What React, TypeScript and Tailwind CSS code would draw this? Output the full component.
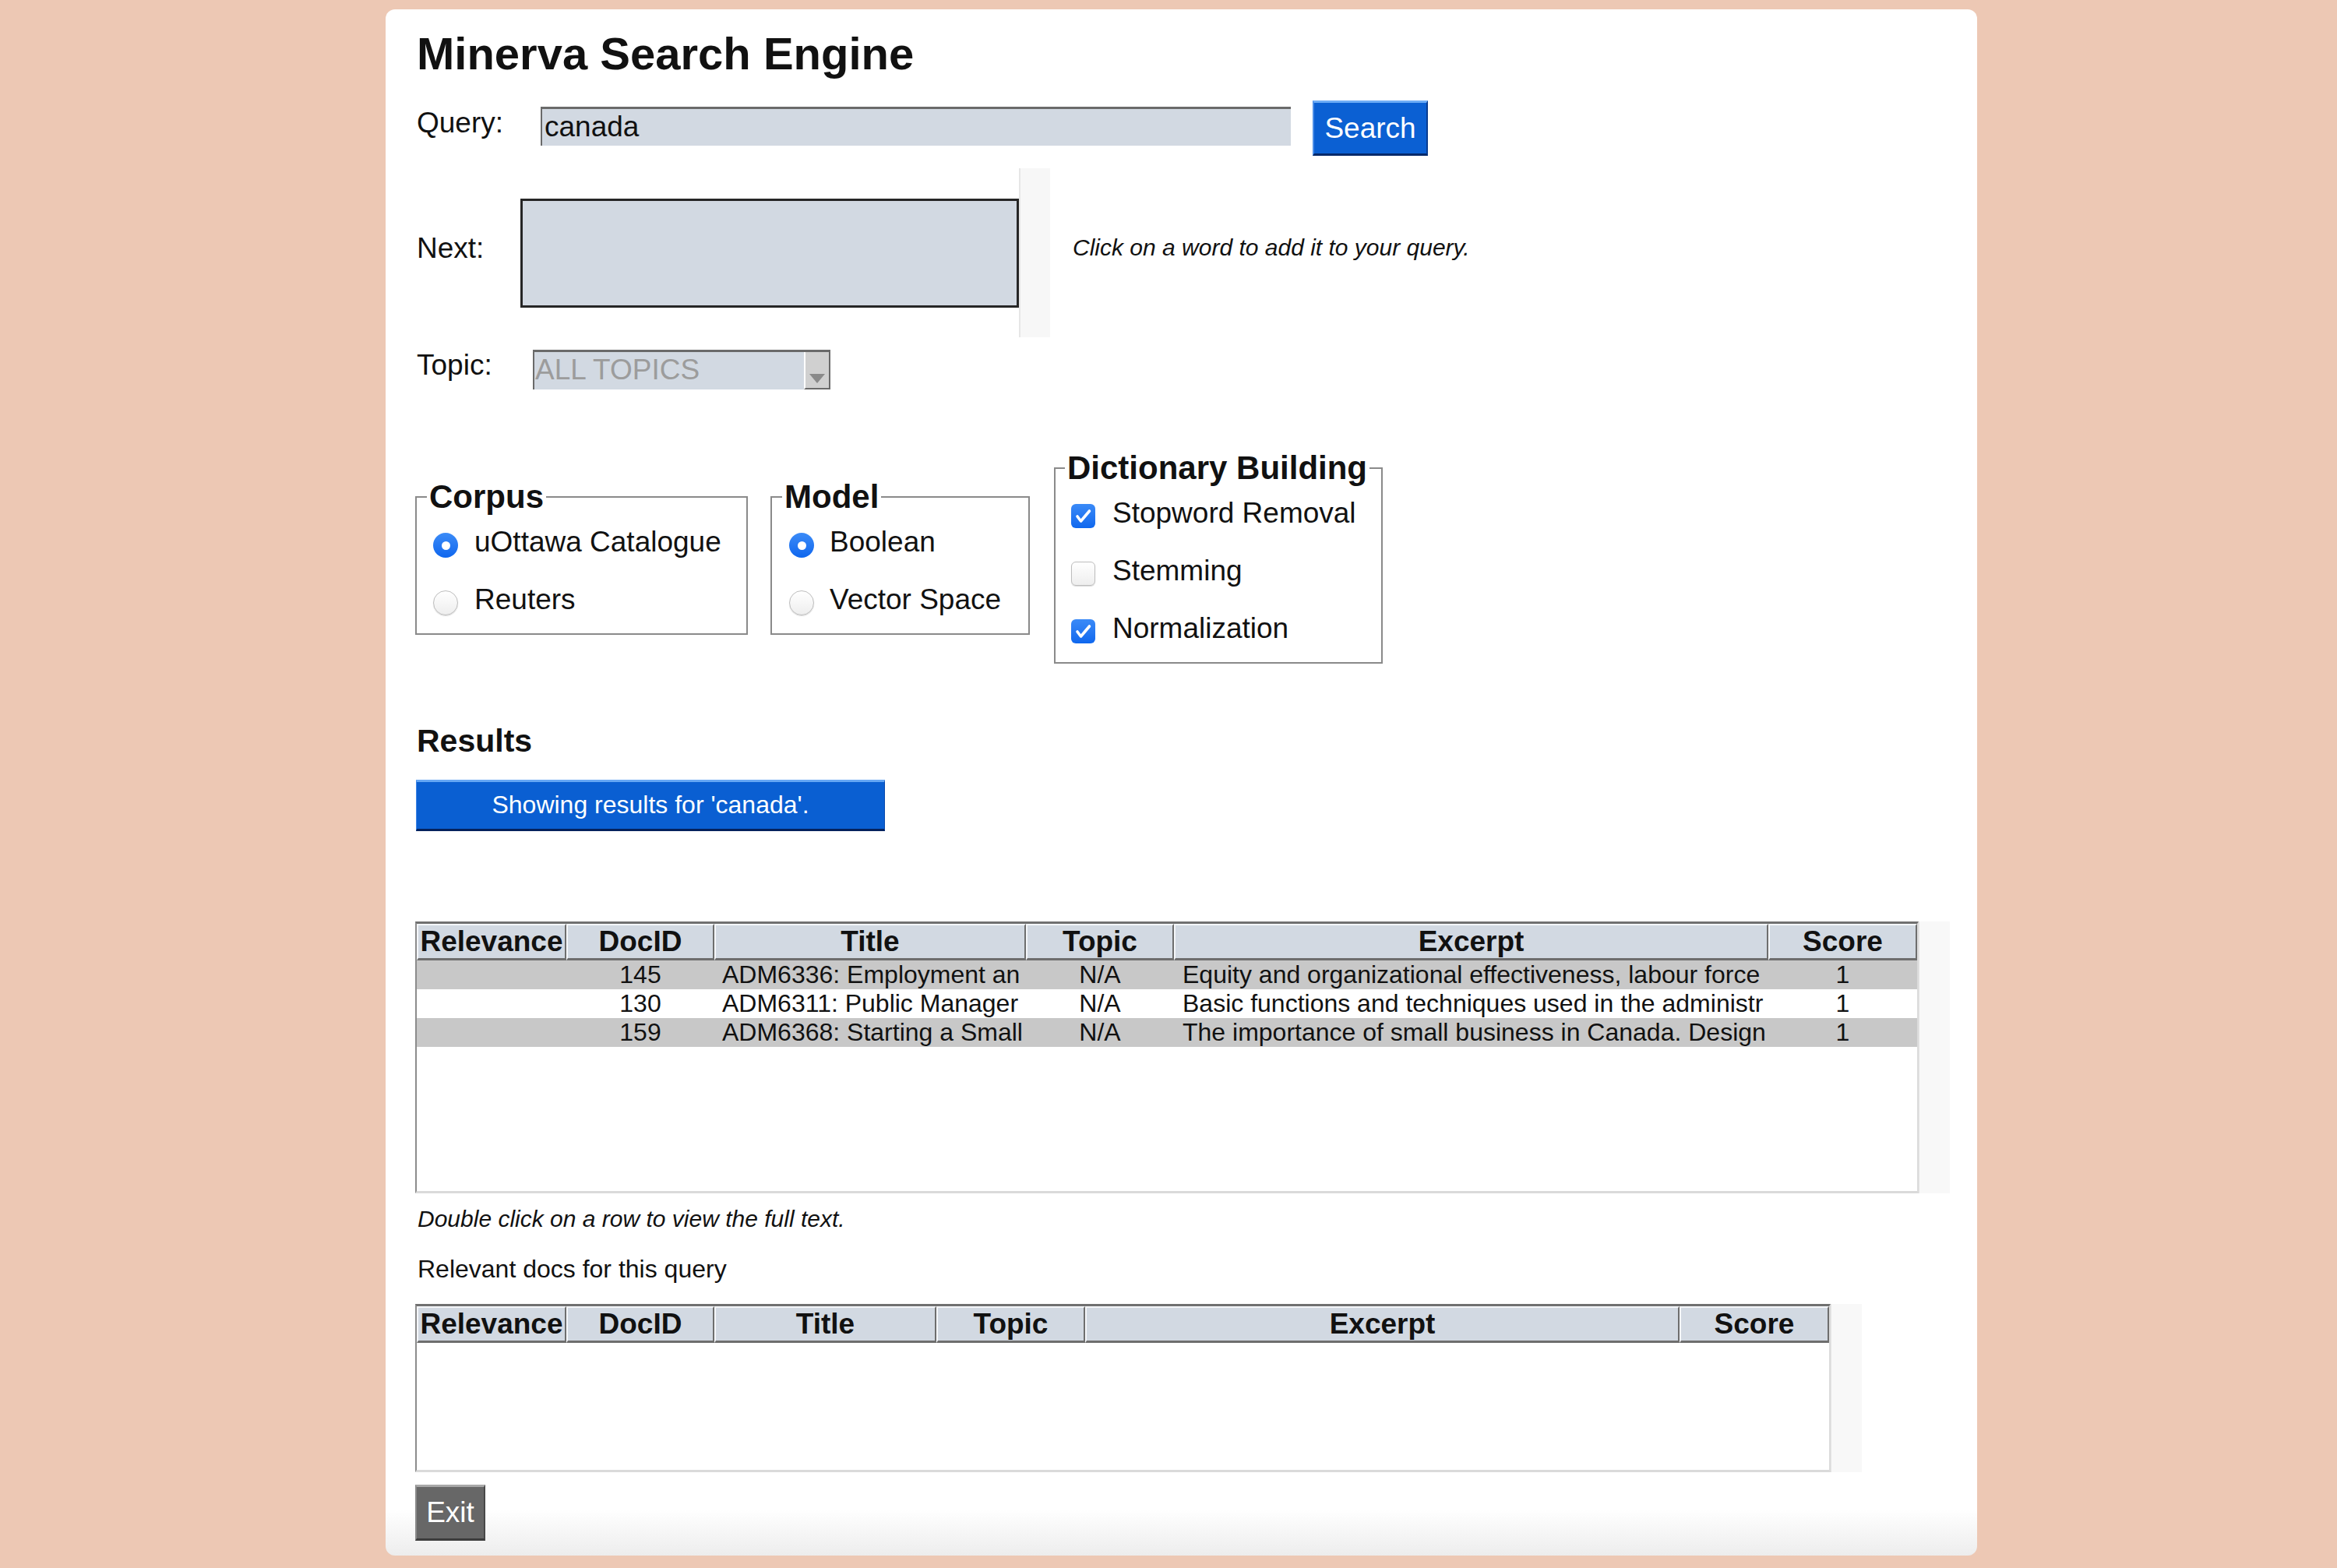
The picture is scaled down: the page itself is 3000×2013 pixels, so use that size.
import React from 'react';

interface Col {
    name: string;
    w: string;
    align: string;
}

interface Row {
    id: string;
    title: string;
    topic: string;
    excerpt: string;
    score: string;
}

const resultCols: Col[] = [
    { name: 'Relevance', w: 'w-[192px]', align: 'text-center' },
    { name: 'DocID', w: 'w-[190px]', align: 'text-center' },
    { name: 'Title', w: 'w-[400px]', align: 'text-left pl-[10px]' },
    { name: 'Topic', w: 'w-[190px]', align: 'text-center' },
    { name: 'Excerpt', w: 'w-[763px]', align: 'text-left pl-[11px]' },
    { name: 'Score', w: 'w-[191px]', align: 'text-center' },
];

const relevantCols: Col[] = [
    { name: 'Relevance', w: 'w-[192px]', align: 'text-center' },
    { name: 'DocID', w: 'w-[190px]', align: 'text-center' },
    { name: 'Title', w: 'w-[285px]', align: 'text-left pl-[10px]' },
    { name: 'Topic', w: 'w-[191px]', align: 'text-center' },
    { name: 'Excerpt', w: 'w-[763px]', align: 'text-left pl-[11px]' },
    { name: 'Score', w: 'w-[192px]', align: 'text-center' },
];

// cell text as the table shows it (columns cut the rest off)
const results: Row[] = [
    {
        id: '145',
        title: 'ADM6336: Employment an',
        topic: 'N/A',
        excerpt: 'Equity and organizational effectiveness, labour force',
        score: '1',
    },
    {
        id: '130',
        title: 'ADM6311: Public Manager',
        topic: 'N/A',
        excerpt: 'Basic functions and techniques used in the administr',
        score: '1',
    },
    {
        id: '159',
        title: 'ADM6368: Starting a Small',
        topic: 'N/A',
        excerpt: 'The importance of small business in Canada. Design',
        score: '1',
    },
];

const Radio: React.FC<{ checked?: boolean }> = ({ checked }) =>
    checked ? (
        <span className="mt-[9px] flex h-[32px] w-[32px] shrink-0 items-center justify-center rounded-full bg-linear-to-b from-[#3B8BF7] to-[#0D66EE]">
            <span className="h-[11px] w-[11px] rounded-full bg-white" />
        </span>
    ) : (
        <span className="mt-[9px] h-[32px] w-[32px] shrink-0 rounded-full border border-[#BDBDBD] bg-linear-to-b from-white to-[#EEEEEE] shadow-[0_1px_1px_rgba(0,0,0,0.15)]" />
    );

const Checkbox: React.FC<{ checked?: boolean }> = ({ checked }) =>
    checked ? (
        <span className="mt-[9px] flex h-[31px] w-[31px] shrink-0 items-center justify-center rounded-[6px] bg-linear-to-b from-[#3A8AF7] to-[#0E67EE]">
            <svg width="31" height="31" viewBox="0 0 31 31">
                <polyline points="8,16 12.5,22 23.5,9" fill="none" stroke="white" strokeWidth="3.6" strokeLinecap="round" strokeLinejoin="round" />
            </svg>
        </span>
    ) : (
        <span className="mt-[9px] h-[31px] w-[31px] shrink-0 rounded-[6px] border border-[#BDBDBD] bg-linear-to-b from-white to-[#EEEEEE] shadow-[0_1px_1px_rgba(0,0,0,0.15)]" />
    );

const DataTable: React.FC<{ cols: Col[]; rows: Row[]; box: string }> = ({ cols, rows, box }) => (
    <div className="flex">
        <div className={`${box} overflow-hidden border-t-[3px] border-r-2 border-b-[3px] border-l-2 border-t-[#707070] border-r-[#DCDCDC] border-b-[#DADADA] border-l-[#8C8C8C] bg-white`}>
            <div className="flex">
                {cols.map((c) => (
                    <div
                        key={c.name}
                        className={`${c.w} h-[47px] shrink-0 whitespace-nowrap border-t-2 border-r-2 border-b-[3px] border-l-2 border-t-[#F4F6F9] border-r-[#6E6E6E] border-b-[#6E6E6E] border-l-[#F4F6F9] bg-[#D2D9E2] text-center text-[37px] leading-[42px] font-bold`}
                    >
                        {c.name}
                    </div>
                ))}
            </div>
            {rows.map((r, i) => {
                const vals = ['', r.id, r.title, r.topic, r.excerpt, r.score];
                return (
                    <div key={r.id} className={`flex h-[37px] ${i % 2 === 0 ? 'bg-[#C8C8C8]' : 'bg-white'}`}>
                        {cols.map((c, j) => (
                            <div key={c.name} className={`${c.w} ${c.align} shrink-0 overflow-hidden whitespace-nowrap text-[32px] leading-[37px]`}>
                                {vals[j]}
                            </div>
                        ))}
                    </div>
                );
            })}
        </div>
        <div className="w-[40px] self-stretch border-l border-[#E3E3E3] bg-[#F8F8F8]" />
    </div>
);

const App: React.FC = () => {
    return (
        <div className="h-[2013px] w-[3000px] overflow-hidden bg-[#EDC8B4] pt-[12px] font-['Liberation_Sans',Arial,Helvetica,sans-serif] text-[#111]">
            <div className="ml-[495px] flex h-[1985px] w-[2043px] flex-col items-start rounded-[12px] bg-linear-to-b from-white from-[97%] to-[#EDEDED] pt-[23px] pl-[38px]">
                <h1 className="ml-[2px] text-[58px] leading-[68px] font-bold">Minerva Search Engine</h1>

                {/* query row */}
                <div className="mt-[26px] flex items-start">
                    <div className="mt-[8px] ml-[2px] w-[159px] text-[37px] leading-[42px]">Query:</div>
                    <div className="mt-[8px] h-[50px] w-[963px] border-t-[3px] border-l-2 border-[#6A6A6A] bg-[#D2D9E2] pt-[2px] pl-[3px] text-[37px] leading-[42px]">
                        canada
                    </div>
                    <button className="ml-[28px] h-[71px] w-[148px] border-t-[3px] border-r-2 border-b-[3px] border-l-2 border-t-[#6EADF6] border-r-[#0A3C90] border-b-[#06296A] border-l-[#4C8EE8] bg-[#0B60D3] text-[37px] leading-[42px] text-white">
                        Search
                    </button>
                </div>

                {/* next words */}
                <div className="mt-[16px] flex h-[217px] items-start">
                    <div className="mt-[82px] ml-[2px] w-[133px] text-[37px] leading-[42px]">Next:</div>
                    <div className="flex h-full items-center">
                        <div className="h-[140px] w-[640px] border-[3px] border-[#262626] bg-[#D2D9E2]" />
                        <div className="h-full w-[40px] border-l-2 border-[#E6E6E6] bg-[#F7F7F7]" />
                    </div>
                    <div className="mt-[85px] ml-[29px] text-[30px] leading-[34px] italic">Click on a word to add it to your query.</div>
                </div>

                {/* topic */}
                <div className="mt-[15px] flex items-start">
                    <div className="ml-[2px] w-[149px] text-[37px] leading-[42px]">Topic:</div>
                    <div className="mt-[1px] flex h-[51px] w-[382px] border-t-[3px] border-l-2 border-[#6A6A6A] bg-[#D2D9E2]">
                        <div className="flex-1 pt-[2px] pl-[1px] text-[37px] leading-[42px] text-[#9C9C9C]">ALL TOPICS</div>
                        <div className="flex w-[34px] items-end justify-center border-r-2 border-b-2 border-l-2 border-r-[#6A6A6A] border-b-[#6A6A6A] border-l-white bg-[#D0D0D0] pb-[6px]">
                            <svg width="20" height="12" viewBox="0 0 20 12">
                                <polygon points="0,0 20,0 10,12" fill="#8A8A8A" />
                            </svg>
                        </div>
                    </div>
                </div>

                {/* option groups */}
                <div className="mt-[77px] flex items-center">
                    <fieldset className="w-[427px] border-2 border-[#8A8A8A] pb-[22px]">
                        <legend className="ml-[13px] px-[3px] text-[42px] leading-[47px] font-bold">Corpus</legend>
                        <div className="mt-[14px] flex flex-col gap-[32px] pl-[21px]">
                            <div className="flex h-[42px] items-start gap-[21px] text-[37px] leading-[42px]">
                                <Radio checked />
                                <span>uOttawa Catalogue</span>
                            </div>
                            <div className="flex h-[42px] items-start gap-[21px] text-[37px] leading-[42px]">
                                <Radio />
                                <span>Reuters</span>
                            </div>
                        </div>
                    </fieldset>

                    <fieldset className="ml-[29px] w-[333px] border-2 border-[#8A8A8A] pb-[22px]">
                        <legend className="ml-[13px] px-[3px] text-[42px] leading-[47px] font-bold">Model</legend>
                        <div className="mt-[14px] flex flex-col gap-[32px] pl-[22px]">
                            <div className="flex h-[42px] items-start gap-[20px] text-[37px] leading-[42px]">
                                <Radio checked />
                                <span>Boolean</span>
                            </div>
                            <div className="flex h-[42px] items-start gap-[20px] text-[37px] leading-[42px]">
                                <Radio />
                                <span>Vector Space</span>
                            </div>
                        </div>
                    </fieldset>

                    <fieldset className="ml-[31px] w-[422px] border-2 border-[#8A8A8A] pb-[22px]">
                        <legend className="ml-[12px] px-[3px] text-[42px] leading-[47px] font-bold">Dictionary Building</legend>
                        <div className="mt-[14px] flex flex-col gap-[32px] pl-[20px]">
                            <div className="flex h-[42px] items-start gap-[22px] text-[37px] leading-[42px]">
                                <Checkbox checked />
                                <span>Stopword Removal</span>
                            </div>
                            <div className="flex h-[42px] items-start gap-[22px] text-[37px] leading-[42px]">
                                <Checkbox />
                                <span>Stemming</span>
                            </div>
                            <div className="flex h-[42px] items-start gap-[22px] text-[37px] leading-[42px]">
                                <Checkbox checked />
                                <span>Normalization</span>
                            </div>
                        </div>
                    </fieldset>
                </div>

                <h2 className="mt-[76px] ml-[2px] text-[41px] leading-[47px] font-bold">Results</h2>
                <div className="mt-[26px] ml-[1px] h-[66px] w-[602px] border-t-[3px] border-r border-b-[3px] border-l border-t-[#66A7F4] border-r-[#0A4AAE] border-b-[#04215C] border-l-[#3F86E6] bg-[#0A5FD2] text-center text-[32px] leading-[58px] text-white">
                    Showing results for 'canada'.
                </div>

                <div className="mt-[116px]">
                    <DataTable cols={resultCols} rows={results} box="h-[349px] w-[1930px]" />
                </div>

                <div className="mt-[16px] ml-[3px] text-[30px] leading-[34px] italic">Double click on a row to view the full text.</div>
                <div className="mt-[29px] ml-[3px] text-[32px] leading-[37px]">Relevant docs for this query</div>

                <div className="mt-[26px]">
                    <DataTable cols={relevantCols} rows={[]} box="h-[216px] w-[1817px]" />
                </div>

                <button className="mt-[16px] h-[72px] w-[90px] border-t-[3px] border-r-2 border-b-[3px] border-l-2 border-t-[#A8A8A8] border-r-[#484848] border-b-[#3C3C3C] border-l-[#8A8A8A] bg-[#676767] text-[37px] leading-[42px] text-white">
                    Exit
                </button>
            </div>
        </div>
    );
};

export default App;
